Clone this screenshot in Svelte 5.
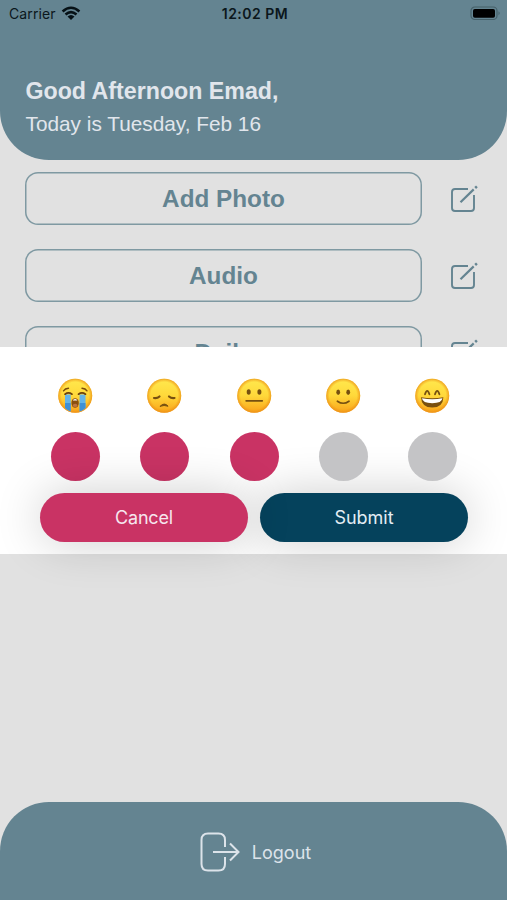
<script>
    const actions = ['Add Photo', 'Audio', 'Daily'];
    const moods = ['crying', 'sad', 'neutral', 'smile', 'grin'];

    let rating = $state(3);
    let open = $state(true);
</script>

<div class="screen">
    <header>
        <div class="status">
            <div class="carrier">
                <span>Carrier</span>
                <svg width="20" height="15" viewBox="0 0 20 15">
                    <path d="M1.6 5.4Q10-1.9 18.4 5.4M4.5 8.4Q10 3.8 15.5 8.4" fill="none" stroke="#061116" stroke-width="2.6" />
                    <path d="M6.5 10.6Q10 7.4 13.5 10.6L10 14Z" fill="#061116" />
                </svg>
            </div>
            <div class="time">12:02 PM</div>
            <div class="battery">
                <svg width="31" height="15" viewBox="0 0 31 15">
                    <rect x="1" y="1" width="26" height="12.5" rx="3.8" fill="none" stroke="#456069" stroke-width="1.2" />
                    <rect x="3" y="3" width="22" height="8.7" rx="1.8" fill="#000" />
                    <path d="M28.5 5.3q2.4 2 0 4z" fill="#456069" />
                </svg>
            </div>
        </div>
        <h1>Good Afternoon Emad,</h1>
        <p>Today is Tuesday, Feb 16</p>
    </header>

    <main>
        {#each actions as action}
            <div class="row">
                <button class="action">{action}</button>
                <svg class="edit" width="28" height="28" viewBox="0 0 28 28" fill="none" stroke="#648491">
                    <path d="M18 4H5Q2 4 2 7V23Q2 26 5 26H21Q24 26 24 23V10" stroke-width="1.9" />
                    <path d="M10.5 17.2L23.7 4.4" stroke-width="2.2" />
                    <path d="M25.2 3L26.9 1.4" stroke-width="2.5" />
                </svg>
            </div>
        {/each}
    </main>

    {#if open}
        <div class="panel">
            <div class="moods">
                {#each moods as mood, i}
                    <div class="mood">
                        <svg width="35" height="35" viewBox="0 0 35 35" fill="none" stroke-linecap="round">
                            <defs>
                                <linearGradient id="face-{mood}" x1="0" y1="0" x2="0" y2="1">
                                    <stop offset="0" stop-color="#ffe94e" />
                                    <stop offset="0.5" stop-color="#ffd83a" />
                                    <stop offset="1" stop-color="#f9a31a" />
                                </linearGradient>
                                <radialGradient id="edge-{mood}">
                                    <stop offset="0.8" stop-color="#ef9414" stop-opacity="0" />
                                    <stop offset="1" stop-color="#e98c16" stop-opacity="0.75" />
                                </radialGradient>
                            </defs>
                            <circle cx="17.2" cy="17.7" r="17" fill="url(#face-{mood})" />
                            <circle cx="17.2" cy="17.7" r="17" fill="url(#edge-{mood})" />
                            {#if mood === 'crying'}
                                <path d="M7 16.5h5.7v17q-3-1-5.7-3.4zM21.6 16.5h5.9v13.4q-3 2.7-5.9 3.6z" fill="#63b4e8" />
                                <path d="M7 25h5.7v8.5q-3-1-5.7-3.4zM21.6 25h5.9v4.9q-3 2.7-5.9 3.6z" fill="#3f90d6" />
                                <path d="M5.5 12.8Q7 10.4 10.5 10.2M29 12.8Q27.5 10.4 24 10.2" stroke="#7a4a0b" stroke-width="1.4" />
                                <path d="M7 16.2Q10.5 13.7 14 16.2M20.5 16.2Q24 13.7 27.5 16.2" stroke="#6b400c" stroke-width="1.7" />
                                <ellipse cx="17.1" cy="25" rx="3.7" ry="4.8" fill="#8a500f" />
                                <path d="M14.8 22.6q.5-1.5 2.3-1.5t2.3 1.5z" fill="#fff" />
                                <ellipse cx="17.1" cy="27.4" rx="2.3" ry="1.6" fill="#bd7440" />
                            {:else if mood === 'sad'}
                                <path d="M7 20Q10.3 20.5 12.5 18.5M27.5 20Q24.2 20.5 22 18.5" stroke="#765010" stroke-width="2.2" />
                                <path d="M13.3 28.2Q17.2 23.8 21.1 28.2Q17.2 26.7 13.3 28.2Z" fill="#765010" stroke="#765010" stroke-width="1" />
                            {:else if mood === 'neutral'}
                                <ellipse cx="11.7" cy="14" rx="2" ry="2.8" fill="#765010" />
                                <ellipse cx="22.4" cy="14" rx="2" ry="2.8" fill="#765010" />
                                <path d="M9.2 22.8h16" stroke="#765010" stroke-width="1.8" />
                            {:else if mood === 'smile'}
                                <ellipse cx="12.2" cy="14.3" rx="1.9" ry="2.7" fill="#765010" />
                                <ellipse cx="22.2" cy="14.3" rx="1.9" ry="2.7" fill="#765010" />
                                <path d="M11.4 23.2Q17.2 27.3 23 23.2" stroke="#765010" stroke-width="1.7" />
                            {:else}
                                <path d="M10 16.3Q12.2 9.5 14.4 16.3M20 16.3Q22.2 9.5 24.4 16.3" stroke="#765010" stroke-width="1.8" />
                                <path d="M6 19.3Q17.2 21 28.4 19.3Q28 29.6 17.2 29.6Q6.5 29.6 6 19.3Z" fill="#79500f" />
                                <path d="M7 20.3Q17.2 22 27.4 20.3Q27 25.2 17.2 25.2Q7.5 25.2 7 20.3Z" fill="#fff" />
                            {/if}
                        </svg>
                        <button class="dot" class:on={i < rating} aria-label={mood} onclick={() => (rating = i + 1)}></button>
                    </div>
                {/each}
            </div>
            <div class="buttons">
                <button class="cancel" onclick={() => (open = false)}>Cancel</button>
                <button class="submit" onclick={() => (open = false)}>Submit</button>
            </div>
        </div>
    {/if}

    <footer>
        <svg width="40" height="40" viewBox="0 0 40 40" fill="none" stroke="#dce3ea" stroke-width="2">
            <path d="M25 15V8Q25 1.5 18.5 1.5H8Q1.5 1.5 1.5 8V32Q1.5 38.5 8 38.5H18.5Q25 38.5 25 32V25" />
            <path d="M13 20H38M30 11.5L38.5 20L30 28.5" />
        </svg>
        <span>Logout</span>
    </footer>
</div>

<style>
    :global(body) {
        margin: 0;
    }

    .screen {
        position: relative;
        display: flex;
        flex-direction: column;
        width: 507px;
        height: 900px;
        overflow: hidden;
        background-color: #e1e1e1;
        font-family: Inter, sans-serif;
    }

    button {
        padding: 0;
        border: none;
        background: none;
        font-family: inherit;
        cursor: pointer;
    }

    header {
        box-sizing: border-box;
        flex: none;
        height: 159.5px;
        border-radius: 0 0 49px 49px;
        background-color: #648491;
        color: #e1e6ec;
        font-family: "Liberation Sans", Arial, sans-serif;
    }

    .status {
        display: grid;
        grid-template-columns: 1fr auto 1fr;
        align-items: center;
        height: 27px;
        padding: 0 6px 0 9px;
        color: #0b171c;
        font-family: Inter, sans-serif;
        font-size: 14px;
    }

    .carrier {
        display: flex;
        align-items: center;
        gap: 5px;
        letter-spacing: 0.1px;
    }

    .time {
        font-weight: 600;
        letter-spacing: 0.5px;
    }

    .battery {
        display: flex;
        justify-content: flex-end;
    }

    h1 {
        margin: 49px 0 0 25.5px;
        font-size: 23.2px;
        line-height: 31px;
    }

    p {
        margin: 1px 0 0 25.5px;
        font-size: 20.8px;
        line-height: 31px;
    }

    main {
        display: flex;
        flex-direction: column;
        gap: 24.3px;
        padding: 12.3px 29px 0 25px;
    }

    .row {
        display: flex;
        align-items: center;
        justify-content: space-between;
    }

    .action {
        box-sizing: border-box;
        width: 397px;
        height: 53px;
        padding-top: 1px;
        border-radius: 13px;
        box-shadow: inset 0 0 0 1.5px #7f99a2;
        color: #648491;
        font-family: "Liberation Sans", Arial, sans-serif;
        font-size: 24.3px;
        font-weight: bold;
    }

    .edit {
        margin-top: 1px;
    }

    /* sheet that covers the list behind it */
    .panel {
        position: absolute;
        top: 347px;
        left: 0;
        box-sizing: border-box;
        width: 100%;
        height: 207px;
        padding-top: 31px;
        background-color: #fff;
    }

    .moods {
        position: relative;
        z-index: 1;
        display: flex;
        justify-content: space-between;
        padding: 0 50px 0 51px;
    }

    .mood {
        display: flex;
        flex-direction: column;
        align-items: center;
        gap: 19px;
        width: 49px;
    }

    .dot {
        width: 49px;
        height: 49px;
        border-radius: 50%;
        background-color: #c4c4c6;
    }

    .dot.on {
        background-color: #c93364;
    }

    .buttons {
        display: flex;
        gap: 12px;
        padding: 12px 39px 0 40px;
    }

    .cancel,
    .submit {
        flex: 1;
        height: 49px;
        border-radius: 25px;
        box-shadow: 0 0 48px rgba(0, 0, 0, 0.2);
        color: #f6e6ee;
        font-size: 18px;
    }

    /* keeps the neighbour's shadow off this button */
    .cancel {
        position: relative;
        z-index: 1;
        background-color: #c93364;
        letter-spacing: -0.2px;
    }

    .submit {
        background-color: #05425c;
        color: #e3edf4;
    }

    footer {
        box-sizing: border-box;
        display: flex;
        flex: none;
        align-items: center;
        justify-content: center;
        gap: 12px;
        height: 98px;
        margin-top: auto;
        padding: 2px 0 0 4px;
        border-radius: 49px 49px 0 0;
        background-color: #648491;
        color: #dce3ea;
        font-size: 18px;
    }
</style>
